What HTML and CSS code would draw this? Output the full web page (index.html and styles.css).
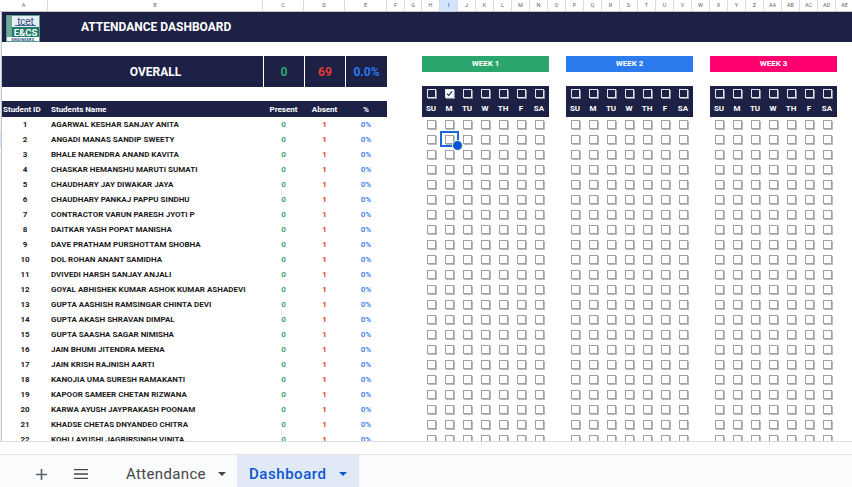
FILE: index.html
```html
<!DOCTYPE html>
<html lang="en">
<head>
<meta charset="utf-8">
<title>Attendance Dashboard</title>
<link rel="stylesheet" href="styles.css">
</head>
<body>
<div class="sheet">
  <div class="colhead">
    <span class="ch ch-a">A</span><span class="ch ch-b">B</span><span class="ch ch-c">C</span><span class="ch ch-c">D</span><span class="ch ch-e">E</span><span class="ch">F</span><span class="ch">G</span><span class="ch">H</span><span class="ch sel">I</span><span class="ch">J</span><span class="ch">K</span><span class="ch">L</span><span class="ch">M</span><span class="ch">N</span><span class="ch">O</span><span class="ch">P</span><span class="ch">Q</span><span class="ch">R</span><span class="ch">S</span><span class="ch">T</span><span class="ch">U</span><span class="ch">V</span><span class="ch">W</span><span class="ch">X</span><span class="ch">Y</span><span class="ch">Z</span><span class="ch">AA</span><span class="ch">AB</span><span class="ch">AC</span><span class="ch">AD</span><span class="ch">AE</span>
  </div>
  <div class="body">
    <div class="rowhead"><span class="rowhead-sel"></span></div>
    <div class="content">
      <header class="titlebar">
        <div class="logo-cell">
          <svg class="logo" viewBox="0 0 34 27" width="34" height="27" aria-hidden="true">
            <rect width="34" height="27" fill="#e6f0ee"/>
            <rect x="0.5" y="0.5" width="33" height="26" fill="none" stroke="#5c9a90"/>
            <rect x="1" y="1" width="5" height="21" fill="#6fa99c"/>
            <rect x="6" y="12" width="27" height="10" fill="#1f7a68"/>
            <rect x="1" y="22" width="32" height="4" fill="#fff"/>
            <path d="M9 10.5h21" stroke="#1d3f86" stroke-width=".8"/>
            <text x="19.5" y="9.5" class="logo-tcet">tcet</text>
            <text x="19.5" y="21" class="logo-ecs">E&amp;CS</text>
            <text x="17" y="25.6" class="logo-eng">ENGINEERS</text>
          </svg>
        </div>
        <h1 class="title">ATTENDANCE DASHBOARD</h1>
      </header>
      <div class="panels">
        <section class="roster">
          <div class="overall">
            <div class="ov ov-label">OVERALL</div>
            <div class="ov ov-present">0</div>
            <div class="ov ov-absent">69</div>
            <div class="ov ov-pct">0.0%</div>
          </div>
          <div class="tr th"><span class="id-head">Student ID</span><span class="name">Students Name</span><span>Present</span><span>Absent</span><span>%</span></div>
          <div class="tr"><span>1</span><span class="name">AGARWAL KESHAR SANJAY ANITA</span><span class="p">0</span><span class="a">1</span><span class="c">0%</span></div>
          <div class="tr"><span>2</span><span class="name">ANGADI MANAS SANDIP SWEETY</span><span class="p">0</span><span class="a">1</span><span class="c">0%</span></div>
          <div class="tr"><span>3</span><span class="name">BHALE NARENDRA ANAND KAVITA</span><span class="p">0</span><span class="a">1</span><span class="c">0%</span></div>
          <div class="tr"><span>4</span><span class="name">CHASKAR HEMANSHU MARUTI SUMATI</span><span class="p">0</span><span class="a">1</span><span class="c">0%</span></div>
          <div class="tr"><span>5</span><span class="name">CHAUDHARY JAY DIWAKAR JAYA</span><span class="p">0</span><span class="a">1</span><span class="c">0%</span></div>
          <div class="tr"><span>6</span><span class="name">CHAUDHARY PANKAJ PAPPU SINDHU</span><span class="p">0</span><span class="a">1</span><span class="c">0%</span></div>
          <div class="tr"><span>7</span><span class="name">CONTRACTOR VARUN PARESH JYOTI P</span><span class="p">0</span><span class="a">1</span><span class="c">0%</span></div>
          <div class="tr"><span>8</span><span class="name">DAITKAR YASH POPAT MANISHA</span><span class="p">0</span><span class="a">1</span><span class="c">0%</span></div>
          <div class="tr"><span>9</span><span class="name">DAVE PRATHAM PURSHOTTAM SHOBHA</span><span class="p">0</span><span class="a">1</span><span class="c">0%</span></div>
          <div class="tr"><span>10</span><span class="name">DOL ROHAN ANANT SAMIDHA</span><span class="p">0</span><span class="a">1</span><span class="c">0%</span></div>
          <div class="tr"><span>11</span><span class="name">DVIVEDI HARSH SANJAY ANJALI</span><span class="p">0</span><span class="a">1</span><span class="c">0%</span></div>
          <div class="tr"><span>12</span><span class="name">GOYAL ABHISHEK KUMAR ASHOK KUMAR ASHADEVI</span><span class="p">0</span><span class="a">1</span><span class="c">0%</span></div>
          <div class="tr"><span>13</span><span class="name">GUPTA AASHISH RAMSINGAR CHINTA DEVI</span><span class="p">0</span><span class="a">1</span><span class="c">0%</span></div>
          <div class="tr"><span>14</span><span class="name">GUPTA AKASH SHRAVAN DIMPAL</span><span class="p">0</span><span class="a">1</span><span class="c">0%</span></div>
          <div class="tr"><span>15</span><span class="name">GUPTA SAASHA SAGAR NIMISHA</span><span class="p">0</span><span class="a">1</span><span class="c">0%</span></div>
          <div class="tr"><span>16</span><span class="name">JAIN BHUMI JITENDRA MEENA</span><span class="p">0</span><span class="a">1</span><span class="c">0%</span></div>
          <div class="tr"><span>17</span><span class="name">JAIN KRISH RAJNISH AARTI</span><span class="p">0</span><span class="a">1</span><span class="c">0%</span></div>
          <div class="tr"><span>18</span><span class="name">KANOJIA UMA SURESH RAMAKANTI</span><span class="p">0</span><span class="a">1</span><span class="c">0%</span></div>
          <div class="tr"><span>19</span><span class="name">KAPOOR SAMEER CHETAN RIZWANA</span><span class="p">0</span><span class="a">1</span><span class="c">0%</span></div>
          <div class="tr"><span>20</span><span class="name">KARWA AYUSH JAYPRAKASH POONAM</span><span class="p">0</span><span class="a">1</span><span class="c">0%</span></div>
          <div class="tr"><span>21</span><span class="name">KHADSE CHETAS DNYANDEO CHITRA</span><span class="p">0</span><span class="a">1</span><span class="c">0%</span></div>
          <div class="tr"><span>22</span><span class="name">KOHLI AYUSHI JAGBIRSINGH VINITA</span><span class="p">0</span><span class="a">1</span><span class="c">0%</span></div>
        </section>
        <section class="week" data-checked="1">
          <div class="banner b-green">WEEK 1</div>
          <div class="checks head-checks"></div>
          <div class="days"><span>SU</span><span>M</span><span>TU</span><span>W</span><span>TH</span><span>F</span><span>SA</span></div>
          <div class="checks body-checks"></div>
        </section>
        <section class="week">
          <div class="banner b-blue">WEEK 2</div>
          <div class="checks head-checks"></div>
          <div class="days"><span>SU</span><span>M</span><span>TU</span><span>W</span><span>TH</span><span>F</span><span>SA</span></div>
          <div class="checks body-checks"></div>
        </section>
        <section class="week">
          <div class="banner b-pink">WEEK 3</div>
          <div class="checks head-checks"></div>
          <div class="days"><span>SU</span><span>M</span><span>TU</span><span>W</span><span>TH</span><span>F</span><span>SA</span></div>
          <div class="checks body-checks"></div>
        </section>
      </div>
    </div>
  </div>
</div>
<footer class="tabbar">
  <button class="icon-btn plus" aria-label="Add sheet"><svg viewBox="0 0 11 11" width="11" height="11"><path d="M5.5 0v11M0 5.5h11" stroke="#5f6368" stroke-width="1.6" fill="none"/></svg></button>
  <button class="icon-btn menu" aria-label="All sheets"><svg viewBox="0 0 14 10" width="14" height="10"><path d="M0 .7h14M0 5h14M0 9.3h14" stroke="#444746" stroke-width="1.3" fill="none"/></svg></button>
  <div class="tab">Attendance<span class="caret"></span></div>
  <div class="tab active">Dashboard<span class="caret"></span></div>
</footer>
<script src="script.js"></script>
</body>
</html>
```
FILE: styles.css
```css
* { box-sizing: border-box; }
html, body { margin: 0; padding: 0; }
body {
  width: 852px;
  height: 487px;
  overflow: hidden;
  background: #fff;
  font-family: Roboto, "Liberation Sans", sans-serif;
  display: flex;
  flex-direction: column;
}
.sheet {
  height: 442px;
  flex: none;
  overflow: hidden;
  display: flex;
  flex-direction: column;
  border-bottom: 1px solid #dadce0;
}
.colhead {
  display: flex;
  flex: none;
  height: 12px;
  border-bottom: 1px solid #c4c7c5;
  overflow: hidden;
}
.ch {
  flex: none;
  width: 18px;
  font-size: 5.5px;
  line-height: 11px;
  text-align: center;
  color: #5f6368;
  border-right: 1px solid #dadce0;
}
.ch-a { width: 48px; }
.ch-b { width: 215px; }
.ch-c { width: 41px; }
.ch-e { width: 42px; }
.ch:nth-child(7) { width: 17px; }
.sel { background: #d3e3fd; color: #0b57d0; }
.body { display: flex; flex: 1; min-height: 0; }
.rowhead {
  flex: none;
  width: 2px;
  background: #eceef0;
  border-right: 1px solid #c4c7c5;
  padding-top: 120px;
}
.rowhead-sel { display: block; height: 15px; background: #d3e3fd; }
.content { flex: 1; min-width: 0; }
.titlebar {
  display: flex;
  align-items: center;
  height: 30px;
  background: #1d2145;
  color: #fff;
}
.logo-cell { width: 46px; flex: none; padding: 2px 0 0 4px; }
.logo { display: block; }
.logo-tcet { font: 400 10px "Liberation Sans", sans-serif; fill: #1d3f86; text-anchor: middle; }
.logo-ecs { font: 700 9.5px Roboto, sans-serif; fill: #fff; text-anchor: middle; }
.logo-eng { font: 700 3.8px Roboto, sans-serif; fill: #1d3f86; text-anchor: middle; letter-spacing: .3px; }
.title { margin: 0 0 0 33px; font-size: 12px; font-weight: 700; line-height: 30px; white-space: nowrap; }
.panels { display: flex; gap: 17px; padding-top: 14px; align-items: flex-start; }
.roster { flex: none; width: 385px; margin-right: 18px; }
.overall { display: flex; gap: 1px; height: 31px; margin-bottom: 14px; }
.ov {
  background: #1d2145;
  display: flex;
  align-items: center;
  justify-content: center;
  font-size: 12px;
  font-weight: 700;
  color: #fff;
}
.ov-label { width: 261px; padding-left: 46px; }
.ov-present { width: 40px; color: #2aa66c; }
.ov-absent { width: 40px; color: #e53935; }
.ov-pct { width: 41px; color: #2b78f0; }
.tr {
  display: grid;
  grid-template-columns: 46px 215px 41px 41px 42px;
  height: 15px;
  align-items: center;
  font-size: 8px;
  font-weight: 700;
  text-align: center;
  color: #1a1a1a;
  white-space: nowrap;
}
.th { height: 16px; background: #1d2145; color: #fff; }
.id-head { text-align: left; padding-left: 1px; }
.name { text-align: left; padding-left: 3px; }
.p { color: #3aa76d; }
.a { color: #e53935; }
.c { color: #4a86f0; }
.week { flex: none; width: 127px; position: relative; }
.banner {
  height: 16px;
  margin-bottom: 14px;
  font-size: 8px;
  font-weight: 700;
  line-height: 16px;
  text-align: center;
  color: #fff;
}
.b-green { background: #2aa66c; }
.b-blue { background: #2b7bef; }
.b-pink { background: #ff0070; }
.checks { display: grid; grid-template-columns: repeat(7, 18px); }
.head-checks { background: #1d2145; height: 16px; padding-top: 3px; }
.days {
  display: grid;
  grid-template-columns: repeat(7, 18px);
  height: 15px;
  background: #1d2145;
  font-size: 8px;
  font-weight: 700;
  line-height: 14px;
  text-align: center;
  color: #fff;
}
.box { width: 18px; height: 15px; display: flex; justify-content: center; align-items: center; padding: 0 0 1px 1px; }
.box i {
  display: block;
  flex: none;
  width: 9px;
  height: 9px;
  border: 1px solid #a0a0a0;
  background: #fff;
  box-shadow: 1px 1px 0 #bbb;
}
.head-checks .box { height: 10px; padding-bottom: 0; align-items: flex-start; }
.head-checks .box i {
  border-color: #e4e5ea;
  background: #1d2145;
  box-shadow: 1px 1px 0 #8d8fa3;
}
.head-checks .box.on i { background: #fff; }
.box.on svg { display: block; width: 7px; height: 7px; }
.cursor {
  position: absolute;
  left: 18px;
  top: 75px;
  width: 19px;
  height: 16px;
  border: 2px solid #1a66dc;
  pointer-events: none;
}
.cursor::after {
  content: "";
  position: absolute;
  right: -6px;
  bottom: -6px;
  width: 9px;
  height: 9px;
  border-radius: 50%;
  background: #0b57d0;
  border: 1px solid #fff;
}
.tabbar {
  flex: 1;
  margin-top: 12px;
  display: flex;
  align-items: stretch;
  background: #f9fbfd;
  border-top: 1px solid #e3e5e7;
  padding-left: 35px;
}
.icon-btn {
  background: none;
  border: 0;
  padding: 6px 0 0;
  display: flex;
  align-items: center;
  justify-content: center;
}
.plus { width: 12px; margin-right: 27px; }
.menu { width: 14px; margin-right: 27px; }
.tab {
  width: 122px;
  padding: 6px 0 0 11px;
  display: flex;
  align-items: center;
  font-size: 15px;
  letter-spacing: .35px;
  color: #444746;
  white-space: nowrap;
}
.tab .caret {
  margin-left: 12px;
  border-left: 4px solid transparent;
  border-right: 4px solid transparent;
  border-top: 4px solid #444746;
}
.tab.active {
  padding-left: 12px;
  letter-spacing: .55px;
  background: #e1e9f7;
  color: #0b57d0;
  font-weight: 500;
}
.tab.active .caret { border-top-color: #0b57d0; }
```
FILE: script.js
```js
// Build the attendance checkbox grids: one header row and 22 student rows per week.
const TICK = '<svg viewBox="0 0 8 8"><path d="M1 4.2 3.1 6.2 7 1.6" fill="none" stroke="#1d2145" stroke-width="1.2"/></svg>';
function boxes(n, checkedIndex) {
  let html = '';
  for (let i = 0; i < n; i++) {
    const on = i === checkedIndex;
    html += `<span class="box${on ? ' on' : ''}"><i>${on ? TICK : ''}</i></span>`;
  }
  return html;
}
document.querySelectorAll('.week').forEach((week) => {
  const checked = week.dataset.checked ? Number(week.dataset.checked) : -1;
  week.querySelector('.head-checks').innerHTML = boxes(7, checked);
  week.querySelector('.body-checks').innerHTML = boxes(7 * 22, -1);
});
const cursor = document.createElement('div');
cursor.className = 'cursor';
document.querySelector('.week').appendChild(cursor);
```
